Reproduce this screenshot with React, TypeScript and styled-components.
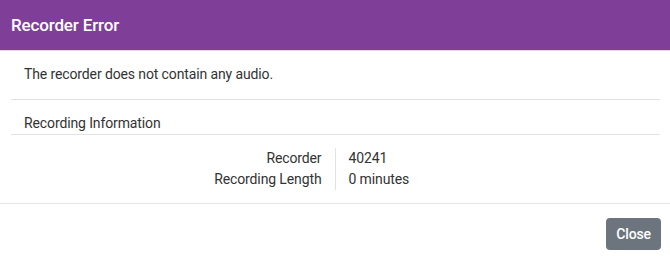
import styled, { createGlobalStyle } from 'styled-components'

const GlobalStyle = createGlobalStyle`
    body {
        margin: 0;
        background: #ffffff;
        font-family: Roboto, "Liberation Sans", Arial, sans-serif;
    }
`;

const Dialog = styled.div`
    width: 670px;
    height: 261px;
    display: flex;
    flex-direction: column;
    background: #ffffff;
    color: #333333;
    font-size: 14px;
    letter-spacing: -0.12px;
`;

const Header = styled.header`
    height: 50px;
    display: flex;
    align-items: center;
    padding: 0 11px;
    background: #7f3f98;
    border-bottom: 1px solid #e3d6ea;
    color: #ffffff;
    font-size: 17px;
    font-weight: 500;
    letter-spacing: -0.15px;
`;

const Body = styled.div`
    margin: 0 10px 0 11px;
    display: flex;
    flex-direction: column;
`;

interface RowProps {
    pad?: string;
}

const Line = styled.div<RowProps>`
    padding: ${props => props.pad ? props.pad : '13px 13px'};
    line-height: 21px;
    border-bottom: 1px solid #e2e2e2;
`;

const InfoTable = styled.div`
    display: grid;
    grid-template-columns: 1fr 1fr;
    padding: 13px 0 13px;
`;

const Labels = styled.div`
    text-align: right;
    padding-right: 13px;
    border-right: 1px solid #e2e2e2;
    line-height: 21px;
`;

const Values = styled.div`
    padding-left: 13px;
    line-height: 21px;
`;

const Footer = styled.footer`
    border-top: 1px solid #e6e6e6;
    display: flex;
    justify-content: flex-end;
    padding: 14px 9px 0 0;
`;

const Button = styled.button`
    height: 32px;
    padding: 0 10px;
    border: none;
    border-radius: 4px;
    background: #6c757d;
    color: #ffffff;
    font-family: Roboto, "Liberation Sans", Arial, sans-serif;
    font-size: 14px;
    font-weight: 500;
    letter-spacing: -0.1px;
    cursor: pointer;
`;

export default function App() {
    return (
        <>
            <GlobalStyle />
            <Dialog>
                <Header>Recorder Error</Header>
                <Body>
                    <Line pad="13px 13px 14px">The recorder does not contain any audio.</Line>
                    <Line pad="13px 13px 0">Recording Information</Line>
                    <InfoTable>
                        <Labels>
                            <div>Recorder</div>
                            <div>Recording Length</div>
                        </Labels>
                        <Values>
                            <div>40241</div>
                            <div>0 minutes</div>
                        </Values>
                    </InfoTable>
                </Body>
                <Footer>
                    <Button>Close</Button>
                </Footer>
            </Dialog>
        </>
    );
}
